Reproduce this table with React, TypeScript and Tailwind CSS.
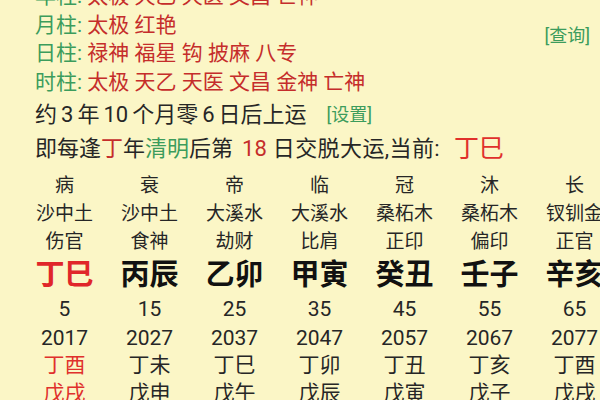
import React from "react";

const cols = [
  { a: "病", b: "沙中土", c: "伤官", d: "丁巳", e: "5", f: "2017", g: "丁酉", h: "戊戌", cur: true },
  { a: "衰", b: "沙中土", c: "食神", d: "丙辰", e: "15", f: "2027", g: "丁未", h: "戊申" },
  { a: "帝", b: "大溪水", c: "劫财", d: "乙卯", e: "25", f: "2037", g: "丁巳", h: "戊午" },
  { a: "临", b: "大溪水", c: "比肩", d: "甲寅", e: "35", f: "2047", g: "丁卯", h: "戊辰" },
  { a: "冠", b: "桑柘木", c: "正印", d: "癸丑", e: "45", f: "2057", g: "丁丑", h: "戊寅" },
  { a: "沐", b: "桑柘木", c: "偏印", d: "壬子", e: "55", f: "2067", g: "丁亥", h: "戊子" },
  { a: "长", b: "钗钏金", c: "正官", d: "辛亥", e: "65", f: "2077", g: "丁酉", h: "戊戌" },
];

const pillars = [
  { k: "年柱", v: "太极 天乙 天医 文昌 亡神" },
  { k: "月柱", v: "太极 红艳" },
  { k: "日柱", v: "禄神 福星 钩 披麻 八专" },
  { k: "时柱", v: "太极 天乙 天医 文昌 金神 亡神" },
];

function D({ children }: { children: React.ReactNode }) {
  return <span className="mx-[4px]">{children}</span>;
}

export default function App() {
  return (
    <div
      className="relative w-[600px] h-[400px] overflow-hidden bg-[#fbf6c6] text-[#262626]"
      style={{ fontFamily: "Roboto, 'Noto Sans CJK SC', sans-serif" }}
    >
      <div className="pl-[35px] mt-[-18px] text-[21px] leading-[28.5px]">
        {pillars.map((p) => (
          <div key={p.k} className="whitespace-nowrap">
            <span className="text-[#3c9c5c]">{p.k}: </span>
            <span className="text-[#c52d2b]">{p.v}</span>
          </div>
        ))}
      </div>
      <div className="absolute right-[10px] top-[25px] text-[18px] leading-[22px] text-[#3c9c5c]">[查询]</div>

      <div className="pl-[35px] mt-[2px] text-[22px] leading-[34px] whitespace-nowrap">
        <div className="flex items-center">
          <span>约<D>3</D>年<D>10</D>个月零<D>6</D>日后上运</span>
          <span className="ml-[20px] text-[18px] text-[#3c9c5c]">[设置]</span>
        </div>
        <div className="flex items-center">
          <span>即每逢</span>
          <span className="text-[#c52d2b]">丁</span>
          <span>年</span>
          <span className="text-[#3c9c5c]">清明</span>
          <span>后第</span>
          <span className="text-[#c52d2b] ml-[9px] mr-[6px]">18</span>
          <span className="tracking-[0.4px]">日交脱大运,当前: </span>
          <span className="ml-[14px] text-[25px] text-[#e0302c]">丁巳</span>
        </div>
      </div>

      <div className="flex pl-[22px] mt-[6px] text-center whitespace-nowrap">
        {cols.map((c, i) => (
          <div key={i} className="w-[85px] shrink-0 flex flex-col">
            <div className="text-[19px] leading-[28px]">{c.a}</div>
            <div className="text-[19px] leading-[28px]">{c.b}</div>
            <div className="text-[19px] leading-[27px]">{c.c}</div>
            <div className={`text-[29px] font-bold leading-[40px] ${c.cur ? "text-[#e0262a]" : "text-[#111]"}`}>{c.d}</div>
            <div className="text-[21px] leading-[29px]">{c.e}</div>
            <div className="text-[21px] leading-[28px]">{c.f}</div>
            <div className={`text-[21px] leading-[27px] ${c.cur ? "text-[#e0302c]" : ""}`}>{c.g}</div>
            <div className={`text-[21px] leading-[29px] ${c.cur ? "text-[#e0302c]" : ""}`}>{c.h}</div>
          </div>
        ))}
      </div>
    </div>
  );
}
